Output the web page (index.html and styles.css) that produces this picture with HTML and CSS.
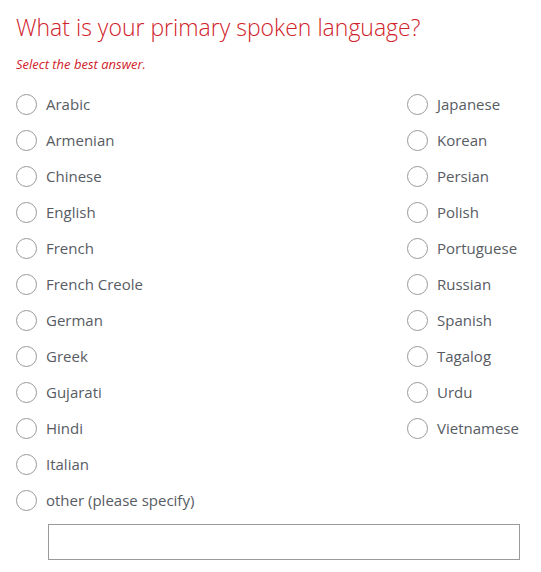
FILE: index.html
```html
<!DOCTYPE html>
<html>
<head>
<meta charset="utf-8">
<link rel="stylesheet" href="styles.css">
</head>
<body>
<div class="question">
  <h1 class="title">What is your primary spoken language?</h1>
  <p class="hint">Select the best answer.</p>
  <div class="options">
    <label class="opt"><span class="radio"></span><span class="lbl">Arabic</span></label>
    <label class="opt"><span class="radio"></span><span class="lbl">Armenian</span></label>
    <label class="opt"><span class="radio"></span><span class="lbl">Chinese</span></label>
    <label class="opt"><span class="radio"></span><span class="lbl">English</span></label>
    <label class="opt"><span class="radio"></span><span class="lbl">French</span></label>
    <label class="opt"><span class="radio"></span><span class="lbl">French Creole</span></label>
    <label class="opt"><span class="radio"></span><span class="lbl">German</span></label>
    <label class="opt"><span class="radio"></span><span class="lbl">Greek</span></label>
    <label class="opt"><span class="radio"></span><span class="lbl">Gujarati</span></label>
    <label class="opt"><span class="radio"></span><span class="lbl">Hindi</span></label>
    <label class="opt"><span class="radio"></span><span class="lbl">Italian</span></label>
    <label class="opt"><span class="radio"></span><span class="lbl">other (please specify)</span></label>
    <label class="opt"><span class="radio"></span><span class="lbl">Japanese</span></label>
    <label class="opt"><span class="radio"></span><span class="lbl">Korean</span></label>
    <label class="opt"><span class="radio"></span><span class="lbl">Persian</span></label>
    <label class="opt"><span class="radio"></span><span class="lbl">Polish</span></label>
    <label class="opt"><span class="radio"></span><span class="lbl">Portuguese</span></label>
    <label class="opt"><span class="radio"></span><span class="lbl">Russian</span></label>
    <label class="opt"><span class="radio"></span><span class="lbl">Spanish</span></label>
    <label class="opt"><span class="radio"></span><span class="lbl">Tagalog</span></label>
    <label class="opt"><span class="radio"></span><span class="lbl">Urdu</span></label>
    <label class="opt"><span class="radio"></span><span class="lbl">Vietnamese</span></label>
  </div>
  <div class="other-box"></div>
</div>
</body>
</html>
```
FILE: styles.css
```css
html, body {
  margin: 0;
  padding: 0;
  background: #ffffff;
}
body {
  font-family: "Open Sans", "Liberation Sans", sans-serif;
}
.question {
  padding: 12px 0 0 16px;
}
.title {
  margin: 0;
  font-size: 23px;
  font-weight: 300;
  line-height: 30px;
  color: #d1222a;
}
.hint {
  margin: 14px 0 0 0;
  font-size: 13px;
  font-style: italic;
  line-height: 16px;
  color: #d1222a;
}
.options {
  margin-top: 14px;
  display: grid;
  grid-template-columns: 391px auto;
  grid-template-rows: repeat(12, 36px);
  grid-auto-flow: column;
}
.opt {
  display: flex;
  align-items: center;
  gap: 9px;
  height: 36px;
}
.radio {
  box-sizing: border-box;
  width: 21px;
  height: 21px;
  border: 1px solid #9a9a9a;
  border-radius: 50%;
  flex: none;
}
.lbl {
  font-size: 15px;
  color: #575c63;
}
.other-box {
  box-sizing: border-box;
  margin: 6px 0 0 32px;
  width: 472px;
  height: 36px;
  border: 1px solid #9a9a9a;
}
```
